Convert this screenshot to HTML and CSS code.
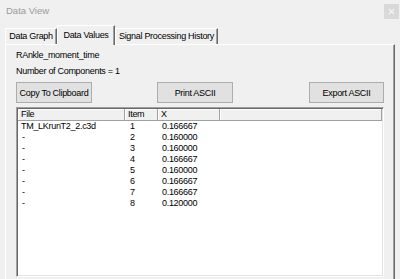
FILE: index.html
```html
<!DOCTYPE html>
<html lang="en">
<head>
  <meta charset="UTF-8" />
  <title>Data View</title>
  <link rel="stylesheet" href="styles.css">
</head>
<body>

  <div class="titlebar">
    <span class="title">Data View</span>
    <span class="close">
      <svg width="15" height="15" viewBox="0 0 15 15">
        <path d="M5 5 L10 10 M10 5 L5 10" stroke="#f4f4f4" stroke-width="1.2" fill="none"/>
      </svg>
    </span>
  </div>

  <div class="tabs">
    <div class="tab tab-graph">Data Graph</div>
    <div class="tab tab-values active">Data Values</div>
    <div class="tab tab-history">Signal Processing History</div>
  </div>

  <div class="panel">
    <div class="label">RAnkle_moment_time</div>
    <div class="label">Number of Components = 1</div>

    <div class="buttons">
      <button class="btn btn-copy">Copy To Clipboard</button>
      <button class="btn btn-print">Print ASCII</button>
      <button class="btn btn-export">Export ASCII</button>
    </div>

    <div class="list">
      <table>
        <colgroup>
          <col class="col-file">
          <col class="col-item">
          <col class="col-x">
          <col>
        </colgroup>
        <thead>
          <tr><th>File</th><th>Item</th><th>X</th><th></th></tr>
        </thead>
        <tbody>
          <tr><td>TM_LKrunT2_2.c3d</td><td class="num">1</td><td class="val">0.166667</td><td></td></tr>
          <tr><td class="dash">-</td><td class="num">2</td><td class="val">0.160000</td><td></td></tr>
          <tr><td class="dash">-</td><td class="num">3</td><td class="val">0.160000</td><td></td></tr>
          <tr><td class="dash">-</td><td class="num">4</td><td class="val">0.166667</td><td></td></tr>
          <tr><td class="dash">-</td><td class="num">5</td><td class="val">0.160000</td><td></td></tr>
          <tr><td class="dash">-</td><td class="num">6</td><td class="val">0.166667</td><td></td></tr>
          <tr><td class="dash">-</td><td class="num">7</td><td class="val">0.166667</td><td></td></tr>
          <tr><td class="dash">-</td><td class="num">8</td><td class="val">0.120000</td><td></td></tr>
        </tbody>
      </table>
    </div>
  </div>

</body>
</html>
```

FILE: styles.css
```css
body {
  margin: 0;
  height: 279px;
  overflow: hidden;
  background: #f0f0f0;
  font-family: "Liberation Sans", Arial, sans-serif;
  font-size: 9px;
  letter-spacing: -0.3px;
  color: #000;
}

/* window title */
.titlebar {
  height: 22px;
  display: flex;
  justify-content: space-between;
  padding-left: 6px;
}
.title {
  color: #9b9b9b;
  font-size: 9.5px;
  letter-spacing: 0;
  line-height: 21px;
}
.close {
  width: 15px;
  height: 15px;
  margin-top: 4px;
  margin-right: 1px;
  background: #d9d9d9;
  display: flex;
}

/* tab strip */
.tabs {
  height: 22px;
  display: flex;
  align-items: flex-end;
  padding-left: 5px;
}
.tab {
  box-sizing: border-box;
  height: 16px;
  line-height: 15px;
  text-align: center;
  white-space: nowrap;
  border-top: 1px solid #fff;
  border-left: 1px solid #fff;
  border-right: 1px solid #696969;
  box-shadow: inset -1px 0 #a0a0a0;
}
.tab-graph { width: 52px; }
.tab-values { width: 58px; }
.tab-history { width: 103px; }
.tab.active {
  position: relative;
  z-index: 1;
  height: 20px;
  line-height: 19px;
  margin-bottom: -1px;
  background: #f0f0f0;
}

/* tab page */
.panel {
  margin: 0 5px;
  padding: 4px 10px 0 10px;
  height: 240px;
  border-top: 1px solid #fff;
  border-left: 1px solid #fff;
  border-right: 1px solid #696969;
  box-shadow: inset -1px 0 #a0a0a0;
}
.label {
  line-height: 12px;
  white-space: nowrap;
}
.label + .label {
  margin-top: 4px;
}

.buttons {
  display: flex;
  margin-top: 5px;
}
.btn {
  box-sizing: border-box;
  height: 21px;
  padding: 0;
  background: #e1e1e1;
  border: 1px solid #adadad;
  font-family: inherit;
  font-size: 9px;
  letter-spacing: -0.3px;
  white-space: nowrap;
  color: #000;
}
.btn-copy { width: 76px; }
.btn-print { width: 76px; margin-left: 65px; }
.btn-export { width: 75px; margin-left: auto; }

/* list view */
.list {
  box-sizing: border-box;
  height: 170px;
  margin-top: 4px;
  padding: 1px;
  background: #fff;
  border-top: 1px solid #a0a0a0;
  border-left: 1px solid #a0a0a0;
  border-bottom: 1px solid #fff;
  border-right: 1px solid #fff;
  box-shadow: inset 1px 1px #696969, inset -1px -1px #e3e3e3;
}
.list table {
  width: 100%;
  table-layout: fixed;
  border-spacing: 0;
  font-size: 9px;
}
.col-file { width: 107px; }
.col-item { width: 33px; }
.col-x { width: 62px; }

.list th {
  height: 10px;
  padding: 0 0 1px 3px;
  line-height: 10px;
  text-align: left;
  font-weight: normal;
  background: #f0f0f0;
  border-right: 1px solid #a0a0a0;
  border-bottom: 1px solid #a0a0a0;
  box-shadow: inset 1px 1px #fff;
}
.list td {
  height: 11px;
  padding: 0 0 0 3px;
  line-height: 11px;
  white-space: nowrap;
}
.list td.dash { padding-left: 4px; }
.list td.num { padding-left: 5px; }
.list td.val { padding-left: 4px; }
```
